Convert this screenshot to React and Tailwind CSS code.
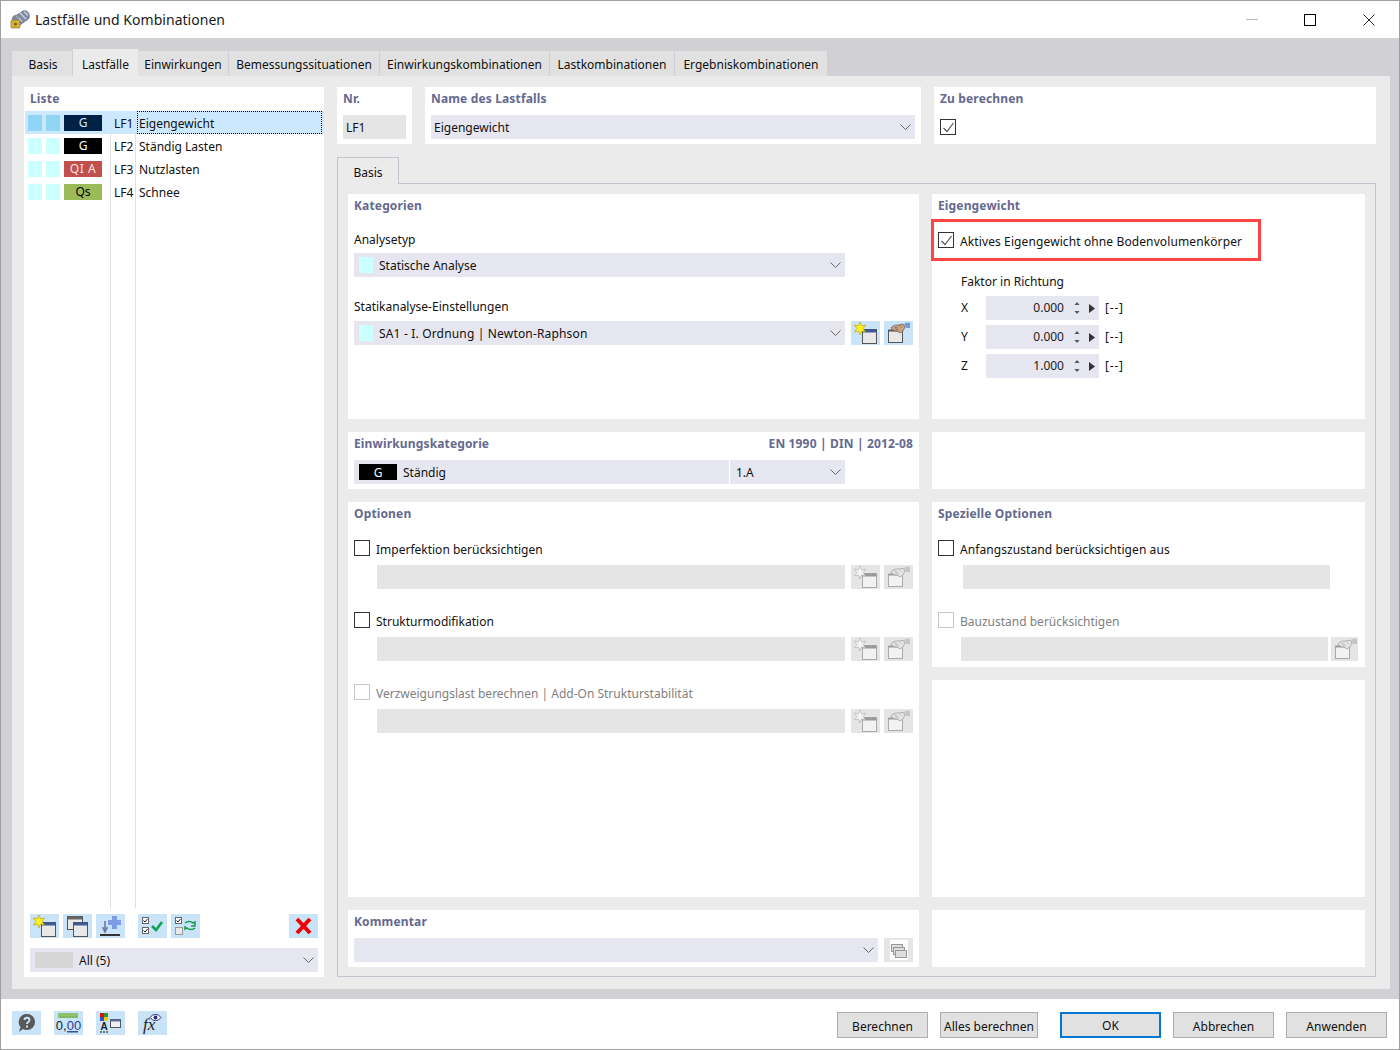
const tabs = [
  ["Basis", "w-[61px] pl-[2px]"],
  ["Lastfälle", "w-[65px]"],
  ["Einwirkungen", "w-[91px]"],
  ["Bemessungssituationen", "w-[151px]"],
  ["Einwirkungskombinationen", "w-[170px]"],
  ["Lastkombinationen", "w-[125px]"],
  ["Ergebniskombinationen", "w-[153px]"],
];

const rows = [
  { nr: "LF1", name: "Eigengewicht", tag: "G", color: "bg-[#002244] text-[#cfe6ff]", selected: true },
  { nr: "LF2", name: "Ständig Lasten", tag: "G", color: "bg-black text-white" },
  { nr: "LF3", name: "Nutzlasten", tag: "QI A", color: "bg-[#c0504d] text-[#ffe0e0] tracking-[0.6px]" },
  { nr: "LF4", name: "Schnee", tag: "Qs", color: "bg-[#9bbb59] text-black" },
];

function NewIcon({ off }) {
  return (
    <svg width="29" height="24" viewBox="0 0 29 24">
      <rect x="11.500" y="8.500" width="14" height="14" fill={off ? "#f2f2f2" : "#e8e8e8"} stroke={off ? "#aaa" : "#555"} />
      <rect x="11.500" y="8.500" width="14" height="3" fill={off ? "#999" : "#3d5a98"} />
      <path d="M9 1l1.500 4 4-1-2.500 3.500 2.500 3.500-4-1-1.500 4-1.500-4-4 1 2.500-3.500L3 4l4 1z" fill={off ? "#f4f4f4" : "#fff21a"} stroke={off ? "#aaa" : "#b59a00"} strokeWidth="0.6" />
    </svg>
  );
}

function HandIcon({ off }) {
  return (
    <svg width="29" height="24" viewBox="0 0 29 24">
      <rect x="4.500" y="9.500" width="14" height="12" fill={off ? "#f2f2f2" : "#e8e8e8"} stroke={off ? "#aaa" : "#555"} />
      <rect x="4.500" y="8.500" width="14" height="2" fill={off ? "#999" : "#555"} />
      <path d="M7 7c2-3 5-3 8-3l4-1 2 3-2 4-3 2-3-2-2 0-2-1z" fill={off ? "#e4e4e4" : "#c9a487"} stroke={off ? "#999" : "#6d5444"} strokeWidth="0.7" />
      <path d="M10 6l4 1M11 8l4 1M15 4l3 3" fill="none" stroke={off ? "#aaa" : "#6d5444"} strokeWidth="0.6" />
      <path d="M20 3c2-1.500 4-1.500 6-1v5h-4z" fill={off ? "#c4c4c4" : "#6f9bd8"} />
    </svg>
  );
}

function CopyIcon() {
  return (
    <svg width="29" height="24" viewBox="0 0 29 24">
      <rect x="4.500" y="2.500" width="15" height="13" fill="#e8e8e8" stroke="#555" />
      <rect x="4.500" y="2.500" width="15" height="3" fill="#666" />
      <rect x="10.500" y="8.500" width="14" height="14" fill="#e8e8e8" stroke="#555" />
      <rect x="10.500" y="8.500" width="14" height="3" fill="#3d5a98" />
    </svg>
  );
}

function ImportIcon() {
  return (
    <svg width="29" height="24" viewBox="0 0 29 24">
      <rect x="4" y="20" width="20" height="2" fill="#333" />
      <path d="M9 7v10M6.500 13l2.500 5 2.500-5" fill="none" stroke="#6a7aa5" strokeWidth="1.600" />
      <path d="M16 2h5v4h4v5h-4v4h-5v-4h-4V6h4z" fill="#7f9be8" />
    </svg>
  );
}

function CheckAllIcon() {
  return (
    <svg width="29" height="24" viewBox="0 0 29 24">
      <rect x="4.500" y="3.500" width="6" height="6" fill="#fff" stroke="#666" />
      <path d="M5.500 6.500l1.500 1.500 2.500-3" fill="none" stroke="#222" />
      <rect x="4.500" y="13.500" width="6" height="6" fill="#fff" stroke="#666" />
      <path d="M5.500 16.500l1.500 1.500 2.500-3" fill="none" stroke="#222" />
      <path d="M14 12l4 4 6-8" fill="none" stroke="#12a150" strokeWidth="2.600" />
    </svg>
  );
}

function SwapIcon() {
  return (
    <svg width="29" height="24" viewBox="0 0 29 24">
      <rect x="4.500" y="3.500" width="6" height="6" fill="#fff" stroke="#666" />
      <path d="M5.500 6.500l1.500 1.500 2.500-3" fill="none" stroke="#222" />
      <rect x="4.500" y="13.500" width="7" height="7" fill="#e8e8e8" stroke="#999" />
      <path d="M14 9c2-2 6-2 8 0l2-1v4h-4" fill="none" stroke="#1b9a4f" strokeWidth="1.500" />
      <path d="M24 14c-2 2-6 2-8 0l-2 1v-3" fill="none" stroke="#1b9a4f" strokeWidth="1.500" />
    </svg>
  );
}

function DeleteIcon() {
  return (
    <svg width="29" height="24" viewBox="0 0 29 24">
      <path d="M8 5l13 14M21 5L8 19" stroke="#f00000" strokeWidth="4" />
    </svg>
  );
}

function HelpIcon() {
  return (
    <svg width="29" height="24" viewBox="0 0 29 24">
      <path d="M15 3a8 8 0 0 1 0 16c-1.500 0-3-.4-4-1l-4 3 1.500-5a8 8 0 0 1 6.500-13z" fill="#595959" />
      <path d="M12.500 9c0-3 5-3 5 0 0 2-2.500 2-2.500 4" fill="none" stroke="#cde5f8" strokeWidth="1.800" />
      <rect x="14" y="14.500" width="2" height="2" fill="#cde5f8" />
    </svg>
  );
}

function DecimalIcon() {
  return (
    <svg width="29" height="24" viewBox="0 0 29 24">
      <rect x="4" y="2" width="20" height="5" fill="#8dc26b" />
      <path d="M7 5v2M10 5v2M13 5v2M16 5v2M19 5v2M22 5v2" stroke="#5c8f42" strokeWidth="0.6" />
      <text x="14.500" y="18.500" textAnchor="middle" fontSize="13" fontFamily="Liberation Sans, sans-serif" fill="#222">
        0,<tspan fill="#2b3f8f">00</tspan>
      </text>
      <rect x="13" y="20" width="11" height="1.500" fill="#3a4d9a" />
    </svg>
  );
}

function FontIcon() {
  return (
    <svg width="29" height="24" viewBox="0 0 29 24">
      <rect x="4" y="2" width="4" height="4" fill="#e01010" />
      <rect x="8" y="2" width="4" height="4" fill="#2a9a2a" />
      <rect x="4" y="6" width="4" height="4" fill="#3050d0" />
      <rect x="8" y="6" width="4" height="4" fill="#f0d000" />
      <text x="8" y="19" textAnchor="middle" fontSize="10" fontWeight="700" fontFamily="Liberation Sans, sans-serif" fill="#222">A</text>
      <path d="M4 21h2M7 21h2M10 21h2" stroke="#777" strokeWidth="2" />
      <rect x="14.500" y="8.500" width="10" height="8" fill="#f0f0f0" stroke="#555" />
      <rect x="14.500" y="8.500" width="10" height="2" fill="#5a6f9f" />
    </svg>
  );
}

function FormulaIcon() {
  return (
    <svg width="29" height="24" viewBox="0 0 29 24">
      <text x="5" y="19" fontSize="17" fontStyle="italic" fontFamily="Liberation Serif, serif" fill="#222">fx</text>
      <path d="M12 6.500c3-4 8-4 11 0-3 4-8 4-11 0z" fill="#fff" stroke="#2b2f7a" />
      <circle cx="17.500" cy="6.500" r="2" fill="#2b2f7a" />
    </svg>
  );
}

function CommentIcon() {
  return (
    <svg width="18" height="20" viewBox="0 0 18 20">
      <rect x="0" y="0" width="18" height="20" fill="#fff" />
      <rect x="1.500" y="4.500" width="11" height="7" fill="#ddd" stroke="#999" />
      <rect x="3.500" y="7.500" width="11" height="7" fill="#ddd" stroke="#999" />
      <rect x="5.500" y="10.500" width="11" height="7" fill="#ddd" stroke="#999" />
    </svg>
  );
}

function Chevron() {
  return (
    <svg width="11" height="7" viewBox="0 0 11 7" className="shrink-0">
      <path d="M0.500 0.500l5 5 5-5" fill="none" stroke="#666" strokeWidth="1" />
    </svg>
  );
}

function Btn({ children, off, className = "" }) {
  return (
    <div className={`w-[29px] h-6 shrink-0 ${off ? "bg-[#e5e5e5]" : "bg-[#c9e3f8]"} ${className}`}>{children}</div>
  );
}

function Check({ on, off }) {
  return (
    <div className={`w-4 h-4 shrink-0 border flex items-center justify-center bg-white ${off ? "border-[#c8c8c8]" : "border-[#333]"}`}>
      {on && (
        <svg width="13" height="13" viewBox="0 0 13 13">
          <path d="M1.500 7l3.500 3.500 6.500-8.500" fill="none" stroke="#555" strokeWidth="1.200" />
        </svg>
      )}
    </div>
  );
}

function Heading({ children }) {
  return <div className="font-bold text-[#64698f] leading-[16px] tracking-[0.15px]">{children}</div>;
}

function Combo({ children, className = "" }) {
  return (
    <div className={`h-6 bg-[#e6e6f0] flex items-center justify-between pr-[4px] ${className}`}>
      <div className="flex items-center min-w-0 flex-1">{children}</div>
      <Chevron />
    </div>
  );
}

function Panel({ children, className = "" }) {
  return <div className={`bg-white ${className}`}>{children}</div>;
}

function SpinRow({ label, value }) {
  return (
    <div className="flex items-center h-6 mb-[5px]">
      <div className="w-[25px]">{label}</div>
      <div className="w-[113px] h-6 bg-[#e6e6f0] flex items-center justify-end">
        <span className="mr-[9px] text-[#222]">{value}</span>
        <svg width="8" height="16" viewBox="0 0 8 16" className="mr-[8px]">
          <path d="M4 2l2.500 3h-5z" fill="#555" />
          <path d="M4 14l2.500-3h-5z" fill="#555" />
        </svg>
        <svg width="6" height="9" viewBox="0 0 6 9" className="mr-[4px]">
          <path d="M0 0l6 4.500-6 4.500z" fill="#333" />
        </svg>
      </div>
      <div className="ml-[6px] tracking-[0.8px]">[--]</div>
    </div>
  );
}

function OptionRow({ label, off, className = "" }) {
  return (
    <div className={className}>
      <div className={`flex items-center gap-[6px] h-4 ${off ? "text-[#808080]" : ""}`}>
        <Check off={off} />
        <span className="pt-[4px]">{label}</span>
      </div>
      <div className="flex items-center mt-[9px] ml-[23px]">
        <div className="w-[468px] h-6 bg-[#e5e5e5]" />
        <Btn off className="ml-[6px]"><NewIcon off /></Btn>
        <Btn off className="ml-[4px]"><HandIcon off /></Btn>
      </div>
    </div>
  );
}

export default function App() {
  return (
    <div className="w-[1400px] h-[1050px] border border-[#a0a0a0] bg-white flex flex-col overflow-hidden text-[12px] leading-4 text-[#111] font-['Noto_Sans',sans-serif]">
      {/* title bar */}
      <div className="h-[37px] shrink-0 flex items-center pl-[8px] pr-[24px]">
        <svg width="22" height="22" viewBox="0 0 22 22">
          <path d="M3 9l11-7c2-1 5 0 6 3s0 5-2 6L8 18z" fill="#7d8ba3" stroke="#4d5870" strokeWidth="0.6" />
          <path d="M7 6.500l6 6M11 4l6 6M15 2.500l4 4" stroke="#cfd6e2" strokeWidth="1.300" />
          <rect x="2" y="11" width="9" height="8" rx="1" fill="#d8b23a" stroke="#7c6418" strokeWidth="0.6" />
          <path d="M4 11V9a2.500 2.500 0 0 1 5 0v2" fill="none" stroke="#8a8a8a" strokeWidth="1.100" />
          <circle cx="6.500" cy="15" r="1.600" fill="#7c6418" />
        </svg>
        <div className="ml-[4px] text-[14px] tracking-[0.03px] text-[#1a1a1a]">Lastfälle und Kombinationen</div>
        <div className="ml-auto flex items-center">
          <div className="w-3 h-px bg-[#bdbdbd] mr-[46px]" />
          <div className="w-3 h-3 border border-black mr-[47px]" />
          <svg width="12" height="12" viewBox="0 0 12 12">
            <path d="M0.500 0.500l11 11M11.500 0.500l-11 11" stroke="#111" strokeWidth="0.900" />
          </svg>
        </div>
      </div>

      {/* tabbed area */}
      <div className="flex-1 bg-[#d0d0d5] pl-[11px] pr-[9px] pt-[12px] pb-[10px] flex flex-col min-h-0">
        <div className="flex items-end h-[26px] shrink-0">
          {tabs.map(([label, w], i) => (
            <div
              key={label}
              className={`${w} flex items-center justify-center whitespace-nowrap ${
                i === 1 ? "h-[27px] pt-[4px] bg-[#ebebeb]" : "h-[25px] pt-[2px] bg-[#e1e1e1] border-r border-[#d0d0d5]"
              }`}
            >
              {label}
            </div>
          ))}
        </div>

        <div className="flex-1 bg-[#ebebeb] pl-[12px] pt-[11px] flex gap-[13px] min-h-0">
          {/* list */}
          <Panel className="w-[300px] h-[890px] flex flex-col pt-[4px] pb-[5px]">
            <div className="ml-[6px]"><Heading>Liste</Heading></div>
            <div className="relative flex-1 mt-[4px] ml-[1px]">
              <div className="absolute left-[85px] top-0 bottom-[6px] w-px bg-[#e0e0e0]" />
              <div className="absolute left-[110px] top-0 bottom-[6px] w-px bg-[#e0e0e0]" />
              {rows.map((r) => (
                <div key={r.nr} className={`flex items-center h-[23px] relative ${r.selected ? "bg-[#cce8ff]" : ""}`}>
                  <div className={`w-[14px] h-4 ml-[3px] ${r.selected ? "bg-[#90d5f5]" : "bg-[#ccffff]"}`} />
                  <div className={`w-[14px] h-4 ml-[4px] ${r.selected ? "bg-[#90d5f5]" : "bg-[#ccffff]"}`} />
                  <div className={`w-[38px] h-4 ml-[4px] flex items-center justify-center pt-[1px] ${r.color}`}>{r.tag}</div>
                  <div className="ml-[12px] w-[22px] pt-[3px]">{r.nr}</div>
                  <div className={`ml-[1px] flex-1 h-[23px] flex items-center pl-[1px] pt-[2px] mr-[2px] border ${r.selected ? "border-dotted border-black" : "border-transparent"}`}>
                    {r.name}
                  </div>
                </div>
              ))}
            </div>
            <div className="flex items-center pl-[6px] pr-[6px]">
              <Btn><NewIcon /></Btn>
              <Btn className="ml-[4px]"><CopyIcon /></Btn>
              <Btn className="ml-[4px]"><ImportIcon /></Btn>
              <Btn className="ml-[13px]"><CheckAllIcon /></Btn>
              <Btn className="ml-[4px]"><SwapIcon /></Btn>
              <Btn className="ml-auto"><DeleteIcon /></Btn>
            </div>
            <Combo className="mx-[6px] mt-[10px] pl-[5px]">
              <div className="w-[38px] h-4 bg-[#d6d6d6] mr-[6px]" />
              <span className="pt-[2px]">All (5)</span>
            </Combo>
          </Panel>

          {/* right side */}
          <div className="w-[1039px] flex flex-col">
            <div className="flex h-[57px] gap-[13px]">
              <Panel className="w-[75px] pt-[4px] px-[6px]">
                <Heading>Nr.</Heading>
                <div className="h-6 mt-[8px] bg-[#e5e5e5] flex items-center pl-[3px] pt-[2px] w-[63px]">LF1</div>
              </Panel>
              <Panel className="w-[496px] pt-[4px] px-[6px]">
                <Heading>Name des Lastfalls</Heading>
                <Combo className="mt-[8px] pl-[3px]"><span className="pt-[2px]">Eigengewicht</span></Combo>
              </Panel>
              <Panel className="w-[442px] pt-[4px] px-[6px]">
                <Heading>Zu berechnen</Heading>
                <div className="mt-[12px]"><Check on /></div>
              </Panel>
            </div>

            <div className="mt-[13px] w-[62px] h-[27px] pt-[3px] bg-[#ebebeb] border border-b-0 border-[#c4c4d0] flex items-center justify-center relative z-10">
              Basis
            </div>
            <div className="h-[794px] -mt-px border border-[#c4c4d0] pl-[10px] pt-[10px] flex gap-[13px]">
              {/* left column */}
              <div className="w-[571px] flex flex-col gap-[13px]">
                <Panel className="h-[225px] px-[6px] pt-[4px]">
                  <Heading>Kategorien</Heading>
                  <div className="mt-[18px]">Analysetyp</div>
                  <Combo className="w-[491px] mt-[5px] pl-[5px]">
                    <div className="w-[14px] h-4 bg-[#ccffff] mr-[6px]" />
                    <span className="pt-[2px]">Statische Analyse</span>
                  </Combo>
                  <div className="mt-[22px]">Statikanalyse-Einstellungen</div>
                  <div className="flex mt-[6px]">
                    <Combo className="w-[491px] pl-[5px]">
                      <div className="w-[14px] h-4 bg-[#ccffff] mr-[6px]" />
                      <span className="tracking-[0.17px] pt-[2px]">SA1 - I. Ordnung | Newton-Raphson</span>
                    </Combo>
                    <Btn className="ml-[6px]"><NewIcon /></Btn>
                    <Btn className="ml-[4px]"><HandIcon /></Btn>
                  </div>
                </Panel>
                <Panel className="h-[57px] px-[6px] pt-[4px]">
                  <div className="flex justify-between">
                    <Heading>Einwirkungskategorie</Heading>
                    <Heading>EN 1990 | DIN | 2012-08</Heading>
                  </div>
                  <Combo className="w-[491px] mt-[8px] pl-[5px]">
                    <div className="w-[38px] h-4 bg-black text-white flex items-center justify-center mr-[6px] pt-[1px]">G</div>
                    <span className="w-[326px] pt-[2px]">Ständig</span>
                    <span className="border-l border-white h-6 flex items-center pl-[6px] pt-[2px]">1.A</span>
                  </Combo>
                </Panel>
                <Panel className="h-[395px] px-[6px] pt-[4px]">
                  <Heading>Optionen</Heading>
                  <OptionRow className="mt-[18px]" label="Imperfektion berücksichtigen" />
                  <OptionRow className="mt-[23px]" label="Strukturmodifikation" />
                  <OptionRow className="mt-[23px]" label="Verzweigungslast berechnen | Add-On Strukturstabilität" off />
                </Panel>
                <Panel className="h-[57px] px-[6px] pt-[4px]">
                  <Heading>Kommentar</Heading>
                  <div className="flex mt-[8px]">
                    <Combo className="w-[524px]" />
                    <div className="w-[29px] h-6 ml-[6px] bg-[#e5e5e5] flex items-center justify-center">
                      <CommentIcon />
                    </div>
                  </div>
                </Panel>
              </div>

              {/* right column */}
              <div className="w-[433px] flex flex-col gap-[13px]">
                <Panel className="h-[225px] px-[6px] pt-[4px]">
                  <Heading>Eigengewicht</Heading>
                  <div className="-ml-[7px] mt-[5px] w-[330px] h-[42px] border-[3px] border-[#ff4444] flex items-center pl-[4px] gap-[6px]">
                    <Check on />
                    <span className="tracking-[0.11px] pt-[3px]">Aktives Eigengewicht ohne Bodenvolumenkörper</span>
                  </div>
                  <div className="ml-[23px] mt-[13px]">Faktor in Richtung</div>
                  <div className="ml-[23px] mt-[6px]">
                    <SpinRow label="X" value="0.000" />
                    <SpinRow label="Y" value="0.000" />
                    <SpinRow label="Z" value="1.000" />
                  </div>
                </Panel>
                <Panel className="h-[57px]" />
                <Panel className="h-[165px] px-[6px] pt-[4px]">
                  <Heading>Spezielle Optionen</Heading>
                  <div className="flex items-center gap-[6px] h-4 mt-[18px]">
                    <Check />
                    <span className="pt-[4px] tracking-[0.08px]">Anfangszustand berücksichtigen aus</span>
                  </div>
                  <div className="w-[367px] h-6 bg-[#e5e5e5] mt-[9px] ml-[25px]" />
                  <div className="flex items-center gap-[6px] h-4 mt-[23px] text-[#808080]">
                    <Check off />
                    <span className="pt-[4px]">Bauzustand berücksichtigen</span>
                  </div>
                  <div className="flex mt-[9px] ml-[23px]">
                    <div className="w-[367px] h-6 bg-[#e5e5e5]" />
                    <Btn off className="ml-[3px] !w-[27px]"><HandIcon off /></Btn>
                  </div>
                </Panel>
                <Panel className="h-[217px]" />
                <Panel className="h-[57px]" />
              </div>
            </div>
          </div>
        </div>
      </div>

      {/* footer */}
      <div className="h-[50px] shrink-0 flex items-start pl-[11px] pr-[12px] pt-[12px]">
        <Btn><HelpIcon /></Btn>
        <Btn className="ml-[13px]"><DecimalIcon /></Btn>
        <Btn className="ml-[13px]"><FontIcon /></Btn>
        <Btn className="ml-[13px]"><FormulaIcon /></Btn>
        <div className="ml-auto flex pt-[1px]">
          <button className="w-[91px] h-[26px] pt-[3px] bg-[#e1e1e1] border border-[#adadad]">Berechnen</button>
          <button className="w-[98px] h-[26px] pt-[3px] ml-[12px] bg-[#e1e1e1] border border-[#adadad]">Alles berechnen</button>
          <button className="w-[101px] h-[26px] pt-[2px] ml-[22px] bg-[#e1e1e1] border-2 border-[#0078d7]">OK</button>
          <button className="w-[101px] h-[26px] pt-[3px] ml-[12px] bg-[#e1e1e1] border border-[#adadad]">Abbrechen</button>
          <button className="w-[101px] h-[26px] pt-[3px] ml-[12px] bg-[#e1e1e1] border border-[#adadad]">Anwenden</button>
        </div>
      </div>
    </div>
  );
}
